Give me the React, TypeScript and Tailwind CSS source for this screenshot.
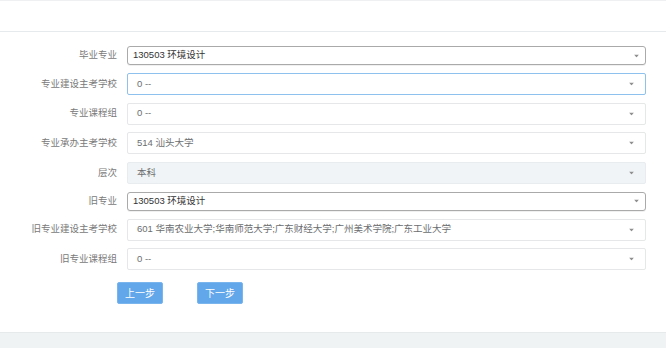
import React from "react";

type Row = {
  label: string;
  value: string;
  kind: "dark" | "focus" | "plain" | "disabled";
};

const rows: Row[] = [
  { label: "毕业专业", value: "130503 环境设计", kind: "dark" },
  { label: "专业建设主考学校", value: "0 --", kind: "focus" },
  { label: "专业课程组", value: "0 --", kind: "plain" },
  { label: "专业承办主考学校", value: "514 汕头大学", kind: "plain" },
  { label: "层次", value: "本科", kind: "disabled" },
  { label: "旧专业", value: "130503 环境设计", kind: "dark" },
  {
    label: "旧专业建设主考学校",
    value: "601 华南农业大学;华南师范大学;广东财经大学;广州美术学院;广东工业大学",
    kind: "plain",
  },
  { label: "旧专业课程组", value: "0 --", kind: "plain" },
];

function Arrow({ right }: { right: string }) {
  return (
    <svg
      width="5"
      height="3"
      viewBox="0 0 5 3"
      className={`absolute top-1/2 -translate-y-1/2 ${right}`}
    >
      <path d="M0 0 L5 0 L2.5 3 Z" fill="#8f8f8f" />
    </svg>
  );
}

function SelectBox({ row }: { row: Row }) {
  if (row.kind === "dark") {
    return (
      <div className="relative h-[19px] w-[519px] rounded-[3px] border border-[#aaaaaa] bg-white pl-[5px] flex items-center text-[#333] shadow-[0_1px_0_rgba(0,0,0,0.06)]">
        <span>{row.value}</span>
        <Arrow right="right-[6px]" />
      </div>
    );
  }
  const cls =
    row.kind === "focus"
      ? "border-[#8fc1ee] bg-white"
      : row.kind === "disabled"
      ? "border-[#e8ecef] bg-[#f1f4f7]"
      : "border-[#e5e7e9] bg-white";
  return (
    <div
      className={`relative h-[22px] w-[519px] rounded-[2px] border ${cls} pl-[9px] flex items-center text-[#6b6e70]`}
    >
      <span>{row.value}</span>
      <Arrow right="right-[11px]" />
    </div>
  );
}

export default function App() {
  return (
    <div
      className="w-[666px] h-[348px] bg-white flex flex-col text-[9.5px] overflow-hidden"
      style={{ fontFamily: '"Liberation Sans", "Noto Sans CJK SC", sans-serif' }}
    >
      <div className="h-[32px] shrink-0 border-t border-t-[#eef0f1] border-b border-b-[#e7eaec] bg-white" />
      <div className="flex-1 flex flex-col pt-[14px]">
        <div className="flex flex-col gap-[7.75px]">
          {rows.map((r, i) => (
            <div key={i} className="flex items-center">
              <div className="w-[117px] text-right text-[#7a7a7a]">{r.label}</div>
              <div className="ml-[10px]">
                <SelectBox row={r} />
              </div>
            </div>
          ))}
        </div>
        <div className="flex mt-[12px] pl-[117px] gap-[34px]">
          <button className="w-[46px] h-[22px] rounded-[2px] bg-[#62a7ea] text-white text-[10px] border border-[#7ab5ee]">
            上一步
          </button>
          <button className="w-[46px] h-[22px] rounded-[2px] bg-[#62a7ea] text-white text-[10px] border border-[#7ab5ee]">
            下一步
          </button>
        </div>
      </div>
      <div className="h-[16px] shrink-0 bg-[#eff3f4] border-t border-t-[#e6eaeb]" />
    </div>
  );
}
